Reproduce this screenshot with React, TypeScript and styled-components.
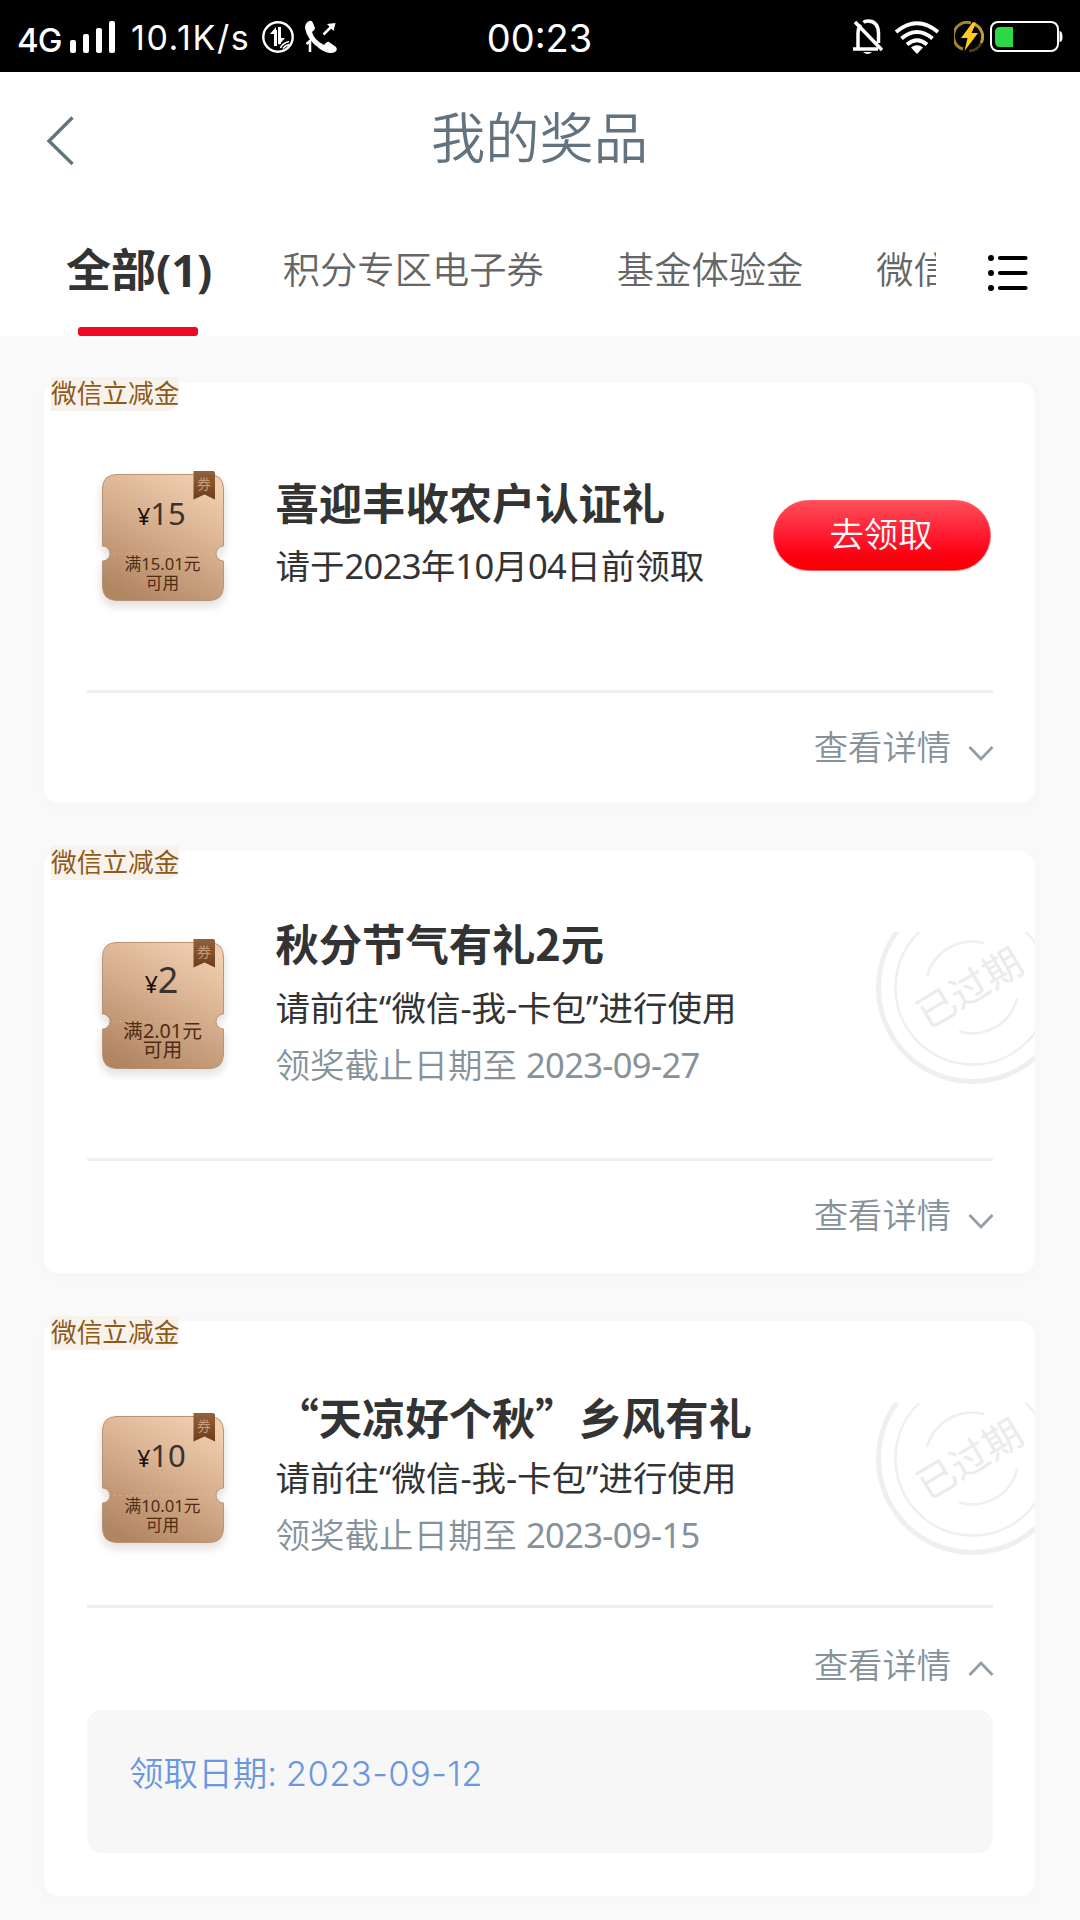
import React from "react";
import styled, { createGlobalStyle } from "styled-components";

const sans = `"Noto Sans", "Noto Sans CJK SC", sans-serif`;
const cjk = `"Noto Sans CJK SC", sans-serif`;
const inter = `Inter, "Noto Sans CJK SC", sans-serif`;

const GlobalStyle = createGlobalStyle`
  * { box-sizing: border-box; }
  body { margin: 0; background: #fafafa; font-family: ${sans}; }
`;

const Page = styled.div`
  width: 1080px;
  height: 1920px;
  overflow: hidden;
  background: #fafafa;
  display: flex;
  flex-direction: column;
`;

const StatusBar = styled.div`
  height: 72px;
  background: #000;
  color: #fff;
  font-family: ${inter};
  display: grid;
  grid-template-columns: 1fr auto 1fr;
  align-items: center;
  padding: 2px 17px 0;
`;

const StatusGroup = styled.div<{ $end?: boolean }>`
  display: flex;
  align-items: center;
  justify-content: ${(p) => (p.$end ? "flex-end" : "flex-start")};
`;

const Network = styled.span`
  font-size: 33px;
  font-weight: 500;
  letter-spacing: -0.8px;
  width: 53px;
  line-height: 40px;
  padding-top: 5px;
`;

const Speed = styled.span`
  font-size: 34px;
  font-weight: 400;
  letter-spacing: 1.6px;
  line-height: 40px;
  width: 129px;
  margin-left: 15px;
  padding-top: 1px;
  white-space: nowrap;
`;

const Clock = styled.span`
  font-size: 38px;
  line-height: 44px;
  padding: 1px 1px 0 0;
`;

const Icon = styled.svg<{ $left?: number }>`
  display: block;
  flex: none;
  margin-left: ${(p) => p.$left ?? 0}px;
`;

const Header = styled.header`
  height: 131px;
  background: #fff;
  display: grid;
  grid-template-columns: 120px 1fr 120px;
  align-items: center;
  padding-left: 45px;
  padding-right: 45px;
`;

const BackIcon = styled(Icon)`
  margin-top: 2px;
`;

const HeaderTitle = styled.h1`
  margin: 0;
  padding: 0 1px 5px 0;
  font: 350 54.3px/80px ${cjk};
  color: #62737f;
  text-align: center;
`;

const TabBar = styled.nav`
  height: 133px;
  background: #fff;
  display: flex;
  padding-left: 66px;
`;

const TabList = styled.div`
  width: 870px;
  overflow: hidden;
  display: flex;
  gap: 73px;
`;

const Tab = styled.div<{ $active?: boolean }>`
  position: relative;
  flex: none;
  height: 133px;
  margin-right: ${(p) => (p.$active ? -2.5 : 0)}px;
  white-space: nowrap;
  font-family: ${sans};
  font-size: ${(p) => (p.$active ? 45 : 37.3)}px;
  font-weight: ${(p) => (p.$active ? 700 : 350)};
  color: ${(p) => (p.$active ? "#333" : "#666")};
  line-height: 133px;
  &::after {
    content: "";
    display: ${(p) => (p.$active ? "block" : "none")};
    position: absolute;
    left: 12px;
    bottom: 0;
    width: 120px;
    height: 9px;
    border-radius: 3px;
    background: #ee0a24;
  }
`;

const MenuButton = styled.div`
  display: flex;
  align-items: center;
  padding: 7px 0 0 51px;
`;

const List = styled.main`
  flex: none;
  display: flex;
  flex-direction: column;
  gap: 48px;
  padding: 46px 45px 24px 44px;
`;

const Card = styled.section<{ $height: number }>`
  position: relative;
  height: ${(p) => p.$height}px;
  flex: none;
  background: #fff;
  border-radius: 15px;
  box-shadow: 0 3px 4px 11px rgba(0, 0, 0, 0.006);
  padding: 0 42px 0 43px;
`;

const Tag = styled.div`
  position: absolute;
  left: 7px;
  top: -5px;
  height: 34px;
  border-radius: 0 0 14px 0;
  background: #f8f2ed;
  color: #8e5a17;
  font: 400 25.7px/30px ${cjk};
  white-space: nowrap;
`;

const CardBody = styled.div<{ $height: number }>`
  display: flex;
  align-items: flex-start;
  height: ${(p) => p.$height}px;
`;

const CouponBox = styled.div<{ $top: number }>`
  position: relative;
  flex: none;
  width: 122px;
  height: 132px;
  margin: ${(p) => p.$top}px 51.5px 0 15px;
`;

const CouponArt = styled.svg`
  position: absolute;
  left: -12px;
  top: -4px;
  overflow: visible;
`;

const CouponText = styled.div`
  position: relative;
  height: 127px;
  display: flex;
  flex-direction: column;
  align-items: center;
`;

const Amount = styled.div<{ $size: number }>`
  display: flex;
  align-items: baseline;
  height: 79px;
  padding-top: ${(p) => (p.$size > 33 ? 14 : 15)}px;
  margin-left: -3px;
  color: #3a3330;
  font: 400 ${(p) => p.$size}px/48px ${sans};
`;

const Yen = styled.span`
  color: #16100c;
  font-size: 23px;
`;

const Rule = styled.div<{ $size: number }>`
  width: 90px;
  margin-top: ${(p) => (p.$size > 18 ? 0 : 1)}px;
  margin-left: -1px;
  text-align: center;
  color: #4f2c12;
  font: 400 ${(p) => p.$size}px/19px ${sans};
  white-space: nowrap;
`;

const Info = styled.div<{ $top: number }>`
  flex: 1;
  padding-top: ${(p) => p.$top}px;
  white-space: nowrap;
`;

const PrizeName = styled.h2<{ $gap: number }>`
  margin: 0 0 ${(p) => p.$gap}px;
  color: #333;
  font: 700 43.3px/64px ${cjk};
`;

const Note = styled.p<{ $muted?: boolean }>`
  margin: 0;
  color: ${(p) => (p.$muted ? "#86929a" : "#333")};
  font: 400 34.5px/57px ${sans};
  font-weight: ${(p) => (p.$muted ? 350 : 400)};
`;

const Digits = styled.span`
  font-weight: 400;
  letter-spacing: -0.65px;
`;

const ClaimButton = styled.button`
  flex: none;
  width: 218px;
  height: 71px;
  margin: 118px 2px 0 0;
  padding: 0 2px 7px 0;
  border: 1px solid #ff5a64;
  border-radius: 36px;
  background: linear-gradient(#ff4f5a, #fe1a30 50%, #fe0012 78%, #f80000);
  color: #fff;
  font: 350 34.3px/60px ${cjk};
`;

const Divider = styled.div`
  height: 3px;
  background: #efefef;
`;

const DetailToggle = styled.div<{ $open?: boolean }>`
  height: ${(p) => (p.$open ? 102 : 109)}px;
  padding: ${(p) => (p.$open ? "8px 0 0" : "0 0 5px")};
  display: flex;
  align-items: center;
  justify-content: flex-end;
  gap: 17px;
  color: #86929a;
  font: 350 34.3px/50px ${cjk};
`;

const ChevronIcon = styled.svg<{ $up?: boolean }>`
  margin: ${(p) => (p.$up ? 9 : 15)}px -1px 0 0;
`;

const Panel = styled.div`
  height: 143px;
  border-radius: 15px;
  background: #f7f7f7;
  padding: 36px 42px;
  color: #6a97e0;
  font: 350 34.6px/54px ${inter};
`;

const PanelDate = styled.span`
  letter-spacing: 0.4px;
  margin-left: -1px;
`;

const StampArea = styled.div<{ $top: number }>`
  position: absolute;
  right: 0;
  top: ${(p) => p.$top}px;
  width: 160px;
  height: 154px;
  overflow: hidden;
`;

function CouponShape({ id }: { id: string }) {
  return (
    <CouponArt width="146" height="156" viewBox="-12 -4 146 156">
      <defs>
        <linearGradient id={id} x1="0.75" y1="0" x2="0.25" y2="1">
          <stop offset="0" stopColor="#f1ceb0" />
          <stop offset="0.5" stopColor="#d3ab8a" />
          <stop offset="1" stopColor="#b08562" />
        </linearGradient>
        <linearGradient id={`${id}r`} x1="0" y1="0" x2="0" y2="1">
          <stop offset="0" stopColor="#93623c" />
          <stop offset="1" stopColor="#6d3c1a" />
        </linearGradient>
        <filter id={`${id}s`} x="-20%" y="-20%" width="140%" height="150%">
          <feDropShadow dx="0" dy="5" stdDeviation="4" floodColor="#3b2a20" floodOpacity="0.16" />
        </filter>
      </defs>
      <path
        filter={`url(#${id}s)`}
        fill={`url(#${id})`}
        stroke="#b99474"
        strokeWidth="1"
        d="M15 .5H107Q121.500 .5 121.500 15V72A7.500 7.500 0 0 0 121.500 87V112Q121.500 126.500 107 126.500H15Q.5 126.500 .5 112V87A7.500 7.500 0 0 0 .5 72V15Q.5 .5 15 .5Z"
      />
      <path d="M11 79.500H111" stroke="#e3c3a6" strokeDasharray="3 3" opacity="0.35" />
      <path d="M91.500 -3H111Q113 -3 113 -1V25.500L102.500 20.500L91.500 25.500Z" fill={`url(#${id}r)`} />
      <text x="102" y="15" textAnchor="middle" fontSize="14" fill="#c59a78" fontFamily="Noto Sans CJK SC">
        券
      </text>
    </CouponArt>
  );
}

function Coupon({ id, top, amount, min }: { id: string; top: number; amount: string; min: string }) {
  const short = amount.length === 1;
  return (
    <CouponBox $top={top}>
      <CouponShape id={id} />
      <CouponText>
        <Amount $size={short ? 36 : 31}>
          <Yen>¥</Yen>
          {amount}
        </Amount>
        <Rule $size={short ? 19.8 : 16.7}>
          满{min}元<br />
          可用
        </Rule>
      </CouponText>
    </CouponBox>
  );
}

function Stamp({ top }: { top: number }) {
  return (
    <StampArea $top={top}>
      <svg width="160" height="154" viewBox="0 0 160 154" fill="none" stroke="#efefef">
        <circle cx="97.500" cy="55.500" r="94" strokeWidth="5" />
        <circle cx="97.500" cy="55.500" r="77" strokeWidth="2.500" />
        <path d="M52 44A47 47 0 0 1 109 11" strokeWidth="2.500" />
        <path d="M84 99.500A46 46 0 0 0 142 66" strokeWidth="2.500" />
        <text
          x="94.500"
          y="70"
          transform="rotate(-31 94.500 56)"
          textAnchor="middle"
          fontFamily="Noto Sans CJK SC"
          fontSize="38.500"
          fill="#ebebeb"
          stroke="none"
        >
          已过期
        </text>
      </svg>
    </StampArea>
  );
}

function Chevron({ up }: { up?: boolean }) {
  return (
    <ChevronIcon $up={up} width="26" height="16" viewBox="0 0 26 16" fill="none" stroke="#929fa6" strokeWidth="2.800">
      <path d={up ? "M1.500 15L13 3L24.500 15" : "M1.500 2L13 14L24.500 2"} />
    </ChevronIcon>
  );
}

function StatusIcons() {
  return (
    <>
      <Icon width="30" height="36" viewBox="0 0 30 36" fill="none" stroke="#fff" strokeWidth="3.500">
        <path d="M5 30V14Q5 9 8 6M10.500 3.500Q12 2 15 2Q25 2 25.500 14V24M2 3L29 31" />
        <path d="M0 30H25" />
        <path d="M10 33H19Q14.500 37 10 33Z" fill="#fff" stroke="none" />
      </Icon>
      <Icon $left={12} width="44" height="33" viewBox="0 0 44 33" fill="none" stroke="#fff" strokeWidth="4">
        <path d="M1 11Q22 -6.500 43 11M6.500 17.500Q22 4.500 37.500 17.500M12 23.500Q22 15 32 23.500" />
        <path d="M16 26.500Q22 22 28 26.500L22 33Z" fill="#fff" stroke="none" />
      </Icon>
      <Icon $left={15} width="30" height="32" viewBox="0 0 30 32" fill="none">
        <path d="M17 2A13.500 13.500 0 0 0 9 28" stroke="#a8862a" strokeWidth="3" />
        <path d="M20 3A13.500 13.500 0 0 1 27 22" stroke="#c39c2c" strokeWidth="3" />
        <path d="M27 22A13.500 13.500 0 0 1 15 30" stroke="#4d3e12" strokeWidth="3" />
        <path d="M19 1L7 17H13.500L10.500 30L24 12H17.500L22 2Z" fill="#ffcb22" />
      </Icon>
      <Icon $left={6} width="73" height="32" viewBox="0 0 73 32" fill="none">
        <rect x="1" y="1" width="67" height="29" rx="7" stroke="#fff" strokeWidth="2" />
        <path d="M69.500 10Q72.500 10 72.500 16Q72.500 21 69.500 21Z" fill="#fff" />
        <path d="M10 6H23V26H10Q5 26 5 21V11Q5 6 10 6Z" fill="#2bd845" />
      </Icon>
    </>
  );
}

export default function App() {
  return (
    <Page>
      <GlobalStyle />
      <StatusBar>
        <StatusGroup>
          <Network>4G</Network>
          <Icon width="46" height="32" viewBox="0 0 46 32" fill="#fff">
            <rect x="0" y="19" width="6" height="13" rx="2" />
            <rect x="13" y="13" width="6" height="19" rx="2" />
            <rect x="26" y="7" width="6" height="25" rx="2" />
            <rect x="39" y="0" width="6" height="32" rx="2" />
          </Icon>
          <Speed>10.1K/s</Speed>
          <Icon $left={2} width="32" height="34" viewBox="0 0 32 34" fill="none" stroke="#fff">
            <circle cx="16" cy="17" r="14.700" strokeWidth="2.400" />
            <path d="M13.500 26V10M17.500 7V24" strokeWidth="3" />
            <path d="M14 7V14H8Z M17 25V18H23Z" fill="#fff" stroke="none" />
            <path d="M18.500 28Q20 23.500 27 21.500M21 28.500Q23 25.500 27 24.500" strokeWidth="1.600" />
          </Icon>
          <Icon $left={11} width="34" height="34" viewBox="0 0 34 34" fill="none">
            <path
              fill="#fff"
              d="M4 1Q7 0 8 3L10 8Q10 10 7 12Q9 20 19 25Q22 21 24 22L31 27Q33 30 30 32Q24 35 15 29Q2 20 0 8Q0 3 4 1Z"
            />
            <path d="M18.500 14.500L27 6" stroke="#fff" strokeWidth="2.500" />
            <path d="M22 4L30.500 3L28.500 11Z" fill="#fff" />
            <path d="M1.500 24L5 21V32" stroke="#fff" strokeWidth="2.500" />
          </Icon>
        </StatusGroup>
        <Clock>00:23</Clock>
        <StatusGroup $end>
          <StatusIcons />
        </StatusGroup>
      </StatusBar>

      <Header>
        <BackIcon width="30" height="52" viewBox="0 0 30 52" fill="none" stroke="#62757f" strokeWidth="3.400">
          <path d="M27.500 4.500L4 28L27.500 51" />
        </BackIcon>
        <HeaderTitle>我的奖品</HeaderTitle>
      </Header>

      <TabBar>
        <TabList>
          <Tab $active>全部(1)</Tab>
          <Tab>积分专区电子券</Tab>
          <Tab>基金体验金</Tab>
          <Tab>微信立减金</Tab>
        </TabList>
        <MenuButton>
          <Icon width="42" height="38" viewBox="0 0 42 38" stroke="#000" strokeWidth="4.200" strokeLinecap="round">
            <path d="M13 4H38.500M13 19H38.500M13 34H38.500" />
            <path d="M4 4H4.010M4 19H4.010M4 34H4.010" strokeWidth="6" />
          </Icon>
        </MenuButton>
      </TabBar>

      <List>
        <Card $height={421}>
          <Tag>微信立减金</Tag>
          <CardBody $height={308}>
            <Coupon id="c15" top={91.5} amount="15" min="15.01" />
            <Info $top={87}>
              <PrizeName $gap={4}>喜迎丰收农户认证礼</PrizeName>
              <Note>
                请于<Digits>2023</Digits>年<Digits>10</Digits>月<Digits>04</Digits>日前领取
              </Note>
            </Info>
            <ClaimButton>去领取</ClaimButton>
          </CardBody>
          <Divider />
          <DetailToggle>
            查看详情
            <Chevron />
          </DetailToggle>
        </Card>

        <Card $height={422}>
          <Tag>微信立减金</Tag>
          <Stamp top={81} />
          <CardBody $height={307}>
            <Coupon id="c2" top={90.5} amount="2" min="2.01" />
            <Info $top={59}>
              <PrizeName $gap={5}>秋分节气有礼2元</PrizeName>
              <Note>请前往“微信-我-卡包”进行使用</Note>
              <Note $muted>
                领奖截止日期至 <Digits>2023-09-27</Digits>
              </Note>
            </Info>
          </CardBody>
          <Divider />
          <DetailToggle>
            查看详情
            <Chevron />
          </DetailToggle>
        </Card>

        <Card $height={575}>
          <Tag>微信立减金</Tag>
          <Stamp top={82} />
          <CardBody $height={284}>
            <Coupon id="c10" top={94.5} amount="10" min="10.01" />
            <Info $top={63}>
              <PrizeName $gap={1}>“天凉好个秋”乡风有礼</PrizeName>
              <Note>请前往“微信-我-卡包”进行使用</Note>
              <Note $muted>
                领奖截止日期至 <Digits>2023-09-15</Digits>
              </Note>
            </Info>
          </CardBody>
          <Divider />
          <DetailToggle $open>
            查看详情
            <Chevron up />
          </DetailToggle>
          <Panel>
            领取日期: <PanelDate>2023-09-12</PanelDate>
          </Panel>
        </Card>
      </List>
    </Page>
  );
}
